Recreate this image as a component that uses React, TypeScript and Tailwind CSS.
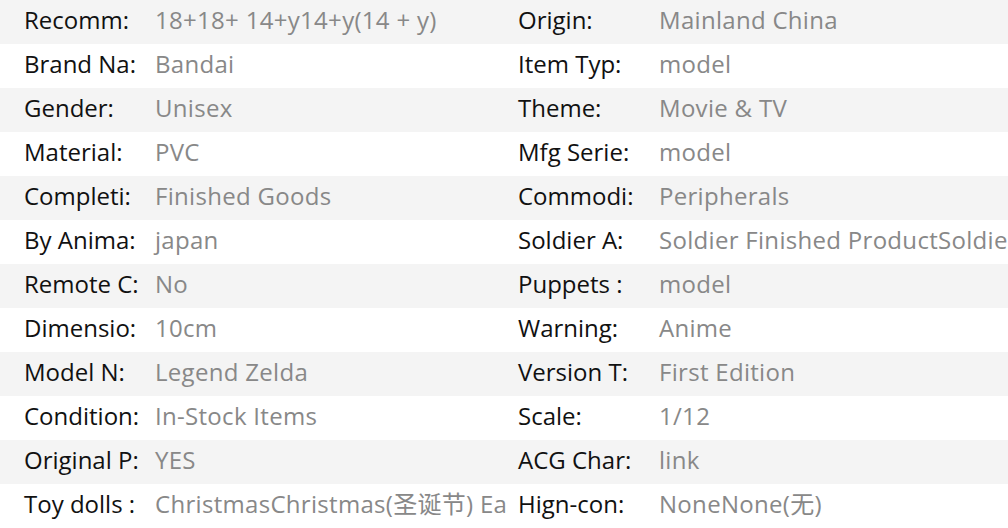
import React from 'react';

// Spec rows: [leftLabel, leftValue, rightLabel, rightValue]
const rows: [string, string, string, string][] = [
  ['Recomm:', '18+18+ 14+y14+y(14 + y)', 'Origin:', 'Mainland China'],
  ['Brand Na:', 'Bandai', 'Item Typ:', 'model'],
  ['Gender:', 'Unisex', 'Theme:', 'Movie & TV'],
  ['Material:', 'PVC', 'Mfg Serie:', 'model'],
  ['Completi:', 'Finished Goods', 'Commodi:', 'Peripherals'],
  ['By Anima:', 'japan', 'Soldier A:', 'Soldier Finished ProductSoldier Finished Product'],
  ['Remote C:', 'No', 'Puppets :', 'model'],
  ['Dimensio:', '10cm', 'Warning:', 'Anime'],
  ['Model N:', 'Legend Zelda', 'Version T:', 'First Edition'],
  ['Condition:', 'In-Stock Items', 'Scale:', '1/12'],
  ['Original P:', 'YES', 'ACG Char:', 'link'],
  ['Toy dolls :', 'ChristmasChristmas(圣诞节) EasterEaster(复活节)', 'Hign-con:', 'NoneNone(无)'],
];

const Cell: React.FC<{ label: string; value: string; labelWidth: string; pad: string; width: string }> = ({
  label,
  value,
  labelWidth,
  pad,
  width,
}) => (
  <div className={`flex items-center overflow-hidden whitespace-nowrap pb-[5px] ${pad} ${width}`}>
    <span className={`shrink-0 text-[#111] ${labelWidth}`}>{label}</span>
    <span className="text-[#888] tracking-[0.3px]">{value}</span>
  </div>
);

export default function App() {
  return (
    <div
      className="w-[1008px] h-[528px] overflow-hidden bg-white text-[24px] leading-[32px]"
      style={{ fontFamily: '"Open Sans", "Noto Sans CJK SC", sans-serif' }}
    >
      {rows.map((r, i) => (
        <div key={i} className={`flex h-[44px] ${i % 2 === 0 ? 'bg-[#f4f4f4]' : 'bg-white'}`}>
          <Cell label={r[0]} value={r[1]} labelWidth="min-w-[131px] pr-[4px]" pad="pl-6" width="w-[508px]" />
          <Cell label={r[2]} value={r[3]} labelWidth="w-[141px]" pad="pl-[10px]" width="w-[500px]" />
        </div>
      ))}
    </div>
  );
}
